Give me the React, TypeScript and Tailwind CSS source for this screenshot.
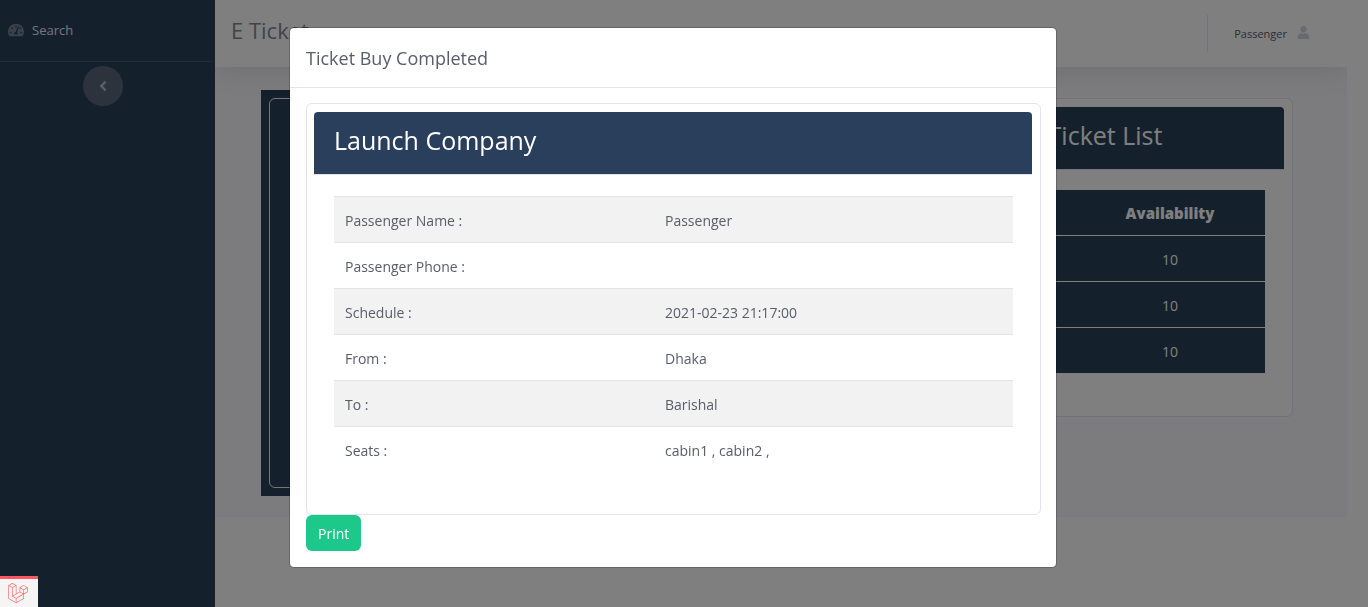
import React from "react";
import { FaAngleLeft, FaLaravel, FaTachometerAlt, FaUser } from "react-icons/fa";

const details: [string, string][] = [
  ["Passenger Name :", "Passenger"],
  ["Passenger Phone :", ""],
  ["Schedule :", "2021-02-23 21:17:00"],
  ["From :", "Dhaka"],
  ["To :", "Barishal"],
  ["Seats :", "cabin1 , cabin2 ,"],
];

const availability = ["10", "10", "10"];

function Sidebar() {
  return (
    <nav className="w-[215px] shrink-0 bg-[#2a405b]">
      <a href="#search" className="flex h-[61px] items-center gap-2 pl-2 text-[13px] text-[#eaecf0]">
        <FaTachometerAlt className="mb-px size-4 text-[#768292]" />
        <span>Search</span>
      </a>
      <div className="mr-1 border-t border-[#4a5c75]" />
      <div className="flex justify-center pt-1 pr-[9px]">
        <button
          type="button"
          aria-label="Collapse sidebar"
          className="flex size-10 items-center justify-center rounded-full bg-[#5a6679] text-[#b5bbc6]"
        >
          <FaAngleLeft className="size-4" />
        </button>
      </div>
    </nav>
  );
}

function Topbar() {
  return (
    <header className="relative flex h-[67px] items-center justify-between bg-white pl-4 pr-[37px] shadow-[0_2px_28px_0_rgba(58,59,69,0.15)]">
      <h1 className="mb-[6px] text-[22px] text-[#858796]">E Ticket</h1>
      <a
        href="#profile"
        className="flex h-[37px] items-center gap-[10px] border-l border-[#e3e6f0] pl-[26px] text-[11px] text-[#5a5c69]"
      >
        <span className="mt-[2px]">Passenger</span>
        <FaUser className="mb-[2px] size-[13px] text-[#d1d3e2]" />
      </a>
    </header>
  );
}

function TicketList() {
  return (
    <section className="mt-2 w-[376px] shrink-0 self-start rounded-[6px] border border-[#e3e3f0] bg-white px-2 pt-2 pb-[43px]">
      <h2 className="h-[62px] rounded-t bg-[#2a405b] pt-2 text-center text-[25px] leading-10 text-white">
        Ticket List
      </h2>
      <div className="border-t border-[#e3e6f0] pt-5 pr-[19px] pl-5">
        <table className="w-full bg-[#2a405b] text-center text-[14px] text-white">
          <thead>
            <tr className="h-[45px]">
              <th className="w-[129px]" />
              <th className="pt-[2px] text-[15px] font-extrabold">Availability</th>
            </tr>
          </thead>
          <tbody>
            {availability.map((n, i) => (
              <tr key={i} className="h-[46px] border-t border-white">
                <td />
                <td className="pt-[2px]">{n}</td>
              </tr>
            ))}
          </tbody>
        </table>
      </div>
    </section>
  );
}

function TicketDialog() {
  return (
    <div
      role="dialog"
      aria-labelledby="dialog-title"
      className="w-full max-w-[768px] rounded-[5px] border border-black/20 bg-white bg-clip-padding text-[#5a5c69]"
    >
      <div className="flex h-[60px] items-center border-b border-[#e3e3f0] px-4 pt-[2px]">
        <h2 id="dialog-title" className="text-[18px]">Ticket Buy Completed</h2>
      </div>
      <div className="pt-[15px] pr-[15px] pb-4 pl-4">
        <section className="rounded-[6px] border border-[#e3e3f0] pt-2 pr-2 pb-[41px] pl-[7px]">
          <h3 className="h-[62px] rounded-t bg-[#2a3f5c] px-5 pt-2 text-[25px] leading-10 text-white">
            Launch Company
          </h3>
          <div className="border-t border-[#e3e3f0] pt-[21px] pr-[19px] pl-5">
            <table className="w-full text-left text-[14px]">
              <tbody>
                {details.map(([label, value]) => (
                  <tr key={label} className="h-[46px] border-t border-[#e3e3f0] odd:bg-[#f2f2f2]">
                    <th scope="row" className="w-[320px] px-[11px] pt-[2px] font-normal">{label}</th>
                    <td className="px-[11px] pt-[2px]">{value}</td>
                  </tr>
                ))}
              </tbody>
            </table>
          </div>
        </section>
        <button type="button" className="h-9 rounded-[6px] bg-[#1cc88a] px-3 pt-[2px] text-[14px] text-white">
          Print
        </button>
      </div>
    </div>
  );
}

export default function App() {
  return (
    <div className="relative min-h-screen bg-white font-['Open_Sans','Noto_Sans',sans-serif]">
      <div className="flex min-h-screen pr-[21px]">
        <Sidebar />
        <div className="flex-1 overflow-hidden">
          <Topbar />
          <main className="flex justify-between bg-[#f8f8fc] pt-[23px] pr-[54px] pb-[21px] pl-[46px]">
            <section className="h-[406px] w-[600px] bg-[#2a405b] p-2">
              <div className="h-full rounded-[6px] border border-white/90" />
            </section>
            <TicketList />
          </main>
        </div>
      </div>
      <a
        href="#debug"
        aria-label="Laravel debug bar"
        className="fixed bottom-0 left-0 z-20 flex h-[31px] w-[38px] items-center justify-center border-t-[3px] border-[#ff5661] bg-[#f5f5f5] pr-[2px] text-[#f4645f]"
      >
        <FaLaravel className="size-5" />
      </a>
      <div className="fixed inset-0 z-10 flex items-start justify-center bg-black/50 pt-[27px] pr-[22px]">
        <TicketDialog />
      </div>
    </div>
  );
}
